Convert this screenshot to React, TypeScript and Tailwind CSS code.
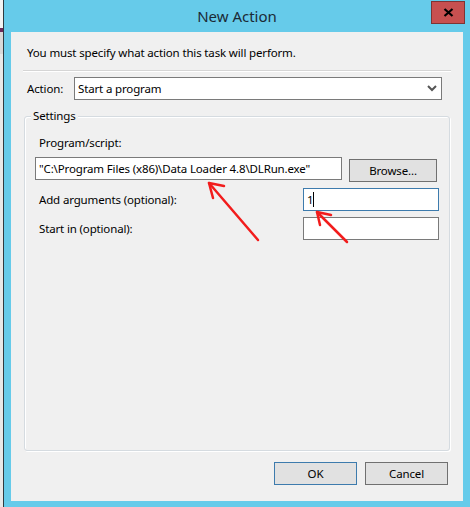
import React from "react";

const font = { fontFamily: '"Noto Sans", "Open Sans", sans-serif' };

const Field: React.FC<{ className?: string; children?: React.ReactNode; focused?: boolean }> = ({
  className = "",
  children,
  focused,
}) => (
  <div
    className={`h-[23px] shrink-0 bg-white border flex items-center pl-[3px] text-[#000] ${
      focused ? "border-[#3d7bad]" : "border-[#7a7a7a]"
    } ${className}`}
  >
    {children}
  </div>
);

const Button: React.FC<{ label: string; isDefault?: boolean; className?: string }> = ({
  label,
  isDefault,
  className = "",
}) => (
  <div
    className={`h-[23px] shrink-0 flex items-center justify-center bg-[#e1e1e1] border text-[#000] ${
      isDefault ? "border-[#3d7bad]" : "border-[#707070]"
    } ${className}`}
  >
    {label}
  </div>
);

const Arrows = () => (
  <svg
    className="absolute inset-0 pointer-events-none"
    width={470}
    height={507}
    viewBox="0 0 470 507"
  >
    <g stroke="#f21c1c" strokeWidth={2.5} fill="none" strokeLinecap="round" strokeLinejoin="round">
      <path d="M258 240 L209 183" />
      <path d="M224 186 L209 183 L213 198" />
      <path d="M347 242 L317 212" />
      <path d="M331 215 L317 212 L320 225" />
    </g>
  </svg>
);

export default function App() {
  return (
    <div className="relative w-[470px] h-[507px] flex overflow-hidden" style={font}>
      {/* background window sliver */}
      <div className="w-[3px] shrink-0 bg-[#f3f3f3] flex flex-col">
        <div className="h-[28px]" />
        <div className="h-[4px] bg-[#6b2a5a]" />
        <div className="h-[22px] bg-[#d8d8d8]" />
        <div className="flex-1 bg-[#e8e8e8]" />
      </div>
      <div className="flex-1 min-w-0 flex flex-col bg-[#66cbea] border-l border-[#2f3a40]">
        {/* title bar */}
        <div className="relative h-[32px] flex items-center justify-center">
          <span className="text-[15px] text-[#1b2a36] pt-[1px]">New Action</span>
          <div className="absolute right-[5px] top-[1px] w-[34px] h-[23px] bg-[#c75050] border border-[#7d3434] flex items-center justify-center">
            <svg width="11" height="9" viewBox="0 0 11 9">
              <path d="M1.5 1 L9.5 8 M9.5 1 L1.5 8" stroke="#000" strokeWidth="2.2" />
            </svg>
          </div>
        </div>
        {/* client area */}
        <div className="ml-[7px] mr-[7px] mb-[6px] flex-1 bg-[#f0f0f0] flex flex-col text-[11.5px] tracking-[-0.15px] text-[#000]">
          <div className="pl-[16px] pt-[12px] h-[38px]">You must specify what action this task will perform.</div>
          <div className="mx-[12px] border-t border-[#d5d5d5] border-b border-b-white" />
          <div className="flex items-center mt-[5px] pl-[16px] pr-[21px]">
            <span className="w-[47px]">Action:</span>
            <div className="flex-1 h-[23px] bg-white border border-[#7a7a7a] flex items-center pl-[3px] pr-[4px]">
              <span className="flex-1">Start a program</span>
              <svg width="10" height="7" viewBox="0 0 10 7">
                <path d="M1 1 L5 5 L9 1" stroke="#555" strokeWidth="2" fill="none" />
              </svg>
            </div>
          </div>
          {/* settings group */}
          <div className="relative mx-[13px] mt-[16px] h-[335px] border border-[#d5dbe0] rounded-[3px] shadow-[inset_1px_1px_0_#ffffff,1px_1px_0_#ffffff]">
            <span className="absolute left-[6px] -top-[9px] px-[2px] bg-[#f0f0f0] leading-[16px]">Settings</span>
            <div className="flex flex-col pl-[10px]">
              <div className="pl-[4px] mt-[17px] h-[18px]">Program/script:</div>
              <div className="flex items-start mt-[5px]">
                <Field className="w-[307px]">"C:\Program Files (x86)\Data Loader 4.8\DLRun.exe"</Field>
                <Button label="Browse..." className="ml-[7px] mt-[2px] w-[88px]" />
              </div>
              <div className="flex items-center mt-[6px]">
                <span className="pl-[4px] w-[268px] shrink-0">Add arguments (optional):</span>
                <Field focused className="w-[136px]">
                  <span>1</span>
                  <span className="w-px h-[15px] bg-black" />
                </Field>
              </div>
              <div className="flex items-center mt-[6px]">
                <span className="pl-[4px] w-[268px] shrink-0">Start in (optional):</span>
                <Field className="w-[136px]" />
              </div>
            </div>
          </div>
          <div className="flex justify-end gap-[8px] mt-[11px] pr-[15px]">
            <Button label="OK" isDefault className="w-[83px]" />
            <Button label="Cancel" className="w-[83px]" />
          </div>
        </div>
      </div>
      <Arrows />
    </div>
  );
}
